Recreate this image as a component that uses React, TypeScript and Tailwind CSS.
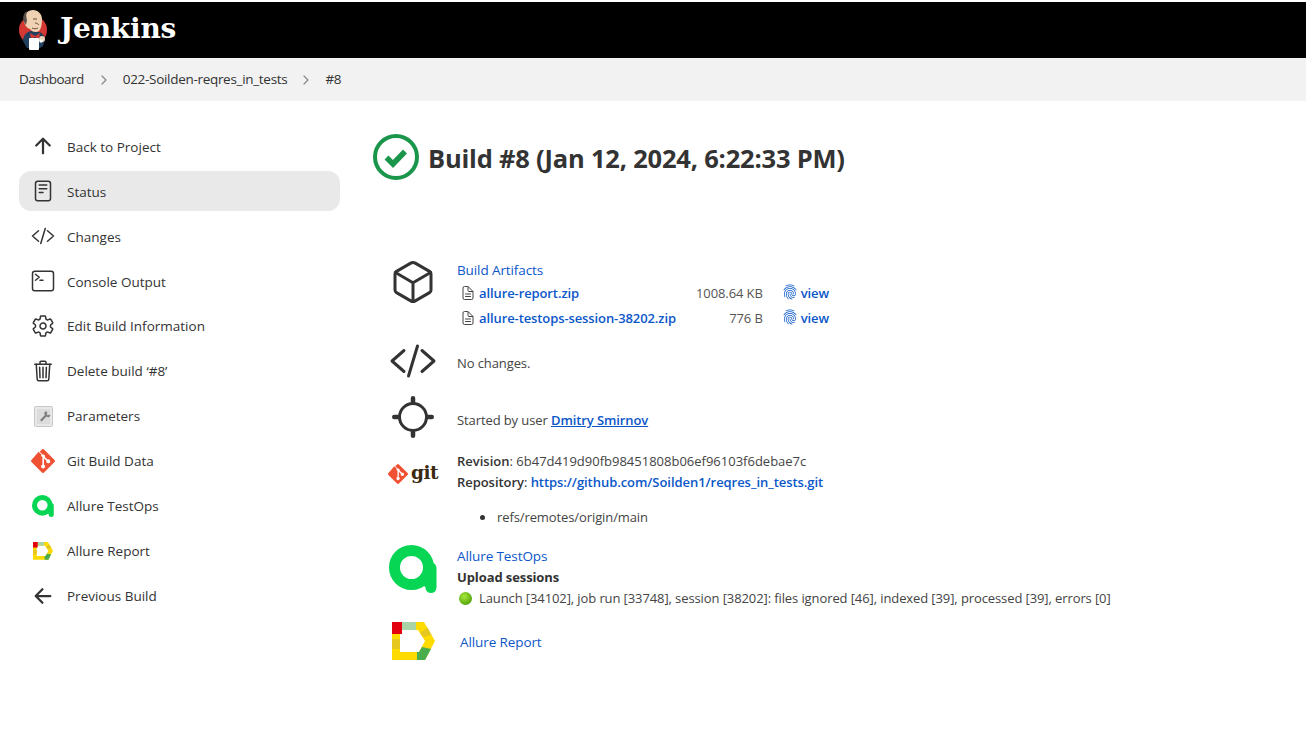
import type { ReactNode } from "react";
import {
  IoArrowBackOutline,
  IoArrowUpOutline,
  IoChevronForwardOutline,
  IoCodeSlashOutline,
  IoCubeOutline,
  IoDocumentTextOutline,
  IoFingerPrintOutline,
  IoLocateOutline,
  IoReaderOutline,
  IoSettingsOutline,
  IoTerminalOutline,
  IoTrashOutline,
} from "react-icons/io5";

const font = { fontFamily: '"Open Sans", "Noto Sans", sans-serif' };
const serif = { fontFamily: '"DejaVu Serif", "Liberation Serif", serif' };

// Jenkins butler, small drawing for the header
const JenkinsLogo = () => (
  <svg width="30" height="40" viewBox="0 0 30 40" aria-hidden="true">
    <circle cx="15" cy="20" r="14" fill="#d33833" />
    <path d="M5 31c0-5 3-9 8-10l8 1c4 1 6 5 6 8l-2 6-3 2H9z" fill="#24405f" />
    <path d="M6 10C6 4 10 0 15 0s9 4 9 9c0 5-1 10-3 12-3 2-7 1-9-2-3-1-6-4-6-9z" fill="#efd2b3" />
    <path d="M6 12C4 7 6 3 9 1c-1 3-1 6 0 9l-1 5z" fill="#5a5049" />
    <path d="M15 9h4M17 13c2 0 3 1 4 2M14 18c2 1 4 1 6 0" stroke="#6b4a38" strokeWidth="1" fill="none" />
    <path d="M12 23l5 3 5-3-1 6-4-2-4 2z" fill="#d33833" />
    <rect x="11" y="28" width="10" height="12" rx="1" fill="#ffffff" />
    <circle cx="24" cy="29" r="3" fill="#efd2b3" />
    <circle cx="23" cy="31" r="1.800" fill="#ffffff" />
  </svg>
);

const StatusIcon = () => (
  <svg width="46" height="46" viewBox="0 0 46 46" aria-hidden="true">
    <circle cx="23" cy="23" r="21" fill="none" stroke="#1a964b" strokeWidth="4" />
    <path d="M13.500 23.500l6.500 6.500L32 17.500" fill="none" stroke="#1a964b" strokeWidth="5.500" />
  </svg>
);

const GitDiamond = ({ size }: { size: number }) => (
  <svg width={size} height={size} viewBox="0 0 24 24" aria-hidden="true">
    <path
      d="M23.5 10.900 13.100.5a1.600 1.600 0 0 0-2.200 0L8.700 2.700l2.800 2.800a1.900 1.900 0 0 1 2.400 2.400l2.700 2.700a1.900 1.900 0 1 1-1.100 1.100l-2.500-2.500v6.600a1.900 1.900 0 1 1-1.600-.1V8.100a1.900 1.900 0 0 1-1-2.500L7.600 2.800.5 10.900a1.600 1.600 0 0 0 0 2.200l10.400 10.400a1.600 1.600 0 0 0 2.200 0l10.400-10.400a1.600 1.600 0 0 0 0-2.200z"
      fill="#f05133"
    />
  </svg>
);

const TestOpsLogo = ({ size }: { size: number }) => (
  <svg width={size} height={size} viewBox="0 0 48 48" aria-hidden="true">
    <circle cx="22.500" cy="22.500" r="17" fill="none" stroke="#07d654" strokeWidth="11" />
    <path d="M42 23V42.500" fill="none" stroke="#07d654" strokeWidth="11" strokeLinecap="round" />
    <path d="M35 35L39 40" fill="none" stroke="#07d654" strokeWidth="7" />
  </svg>
);

const ReportLogo = ({ width }: { width: number }) => (
  <svg width={width} height={(width * 38) / 43} viewBox="0 0 43 38" aria-hidden="true">
    <path
      d="M0 0H32L43 19 33 38H0zM8 8V30H27L33 19 26 8z"
      fill="#fddb00"
      fillRule="evenodd"
    />
    <rect x="10" y="0" width="14" height="8" fill="#a9d3a6" />
    <path d="M35.500 5.500 39.500 13 31 15 28 11z" fill="#e6c71f" />
    <rect x="0" y="17" width="8" height="10" fill="#e6c71f" />
    <path d="M39 27 33 38H25V30H27L30 25z" fill="#49ad4e" />
    <rect x="0" y="0" width="10" height="12" fill="#e3000f" />
  </svg>
);

const ParametersIcon = () => (
  <svg width="19" height="21" viewBox="0 0 19 21" aria-hidden="true">
    <rect x="0.5" y="0.5" width="18" height="20" rx="1" fill="#e8e8e8" stroke="#c8c8c8" />
    <rect x="3" y="3" width="13" height="15" fill="#dcdcdc" />
    <path d="M12 5l-2 2 1 2-5 5 1.500 1.500 5-5 2 1 2-2-1.500-1-1 1-1.500-1.500 1-1z" fill="#7d7d7d" />
  </svg>
);

const sideItems: { label: string; icon: ReactNode; active?: boolean }[] = [
  { label: "Back to Project", icon: <IoArrowUpOutline size={24} /> },
  { label: "Status", icon: <IoReaderOutline size={24} />, active: true },
  { label: "Changes", icon: <IoCodeSlashOutline size={24} /> },
  { label: "Console Output", icon: <IoTerminalOutline size={24} /> },
  { label: "Edit Build Information", icon: <IoSettingsOutline size={24} /> },
  { label: "Delete build ‘#8’", icon: <IoTrashOutline size={24} /> },
  { label: "Parameters", icon: <ParametersIcon /> },
  { label: "Git Build Data", icon: <GitDiamond size={24} /> },
  { label: "Allure TestOps", icon: <TestOpsLogo size={22} /> },
  { label: "Allure Report", icon: <ReportLogo width={20} /> },
  { label: "Previous Build", icon: <IoArrowBackOutline size={24} /> },
];

const artifacts = [
  { name: "allure-report.zip", size: "1008.64 KB" },
  { name: "allure-testops-session-38202.zip", size: "776 B" },
];

const Row = ({ icon, className, children }: { icon: ReactNode; className: string; children: ReactNode }) => (
  <div className={`flex items-center ${className}`}>
    <div className="flex w-[84px] shrink-0 justify-center pr-[4px]">{icon}</div>
    <div className="min-w-0 flex-1">{children}</div>
  </div>
);

export default function App() {
  return (
    <div className="h-[738px] overflow-hidden bg-white pt-[2px] text-[#333333]" style={font}>
      <header className="flex h-[56px] items-center bg-black pl-[18px]">
        <JenkinsLogo />
        <span className="mb-[3px] ml-[12px] text-[28px] leading-none font-bold tracking-[-0.2px] text-white" style={serif}>
          Jenkins
        </span>
      </header>

      <nav className="flex h-[43px] items-center bg-[#f2f2f2] pl-[19px] text-[13.500px] tracking-[-0.3px]">
        <span className="tracking-[-0.55px]">Dashboard</span>
        <IoChevronForwardOutline className="mr-[12px] ml-[13px] text-[#8a8a8a]" size={14} />
        <span>022-Soilden-reqres_in_tests</span>
        <IoChevronForwardOutline className="mx-[12px] text-[#8a8a8a]" size={14} />
        <span>#8</span>
      </nav>

      <div className="flex">
        <aside className="w-[340px] shrink-0 pt-[25px] pl-[19px]">
          <div className="flex flex-col gap-[5px]">
            {sideItems.map((item, i) => (
              <div
                key={item.label}
                className={`flex h-[40px] items-center gap-[12px] rounded-[12px] pl-[12px] text-[13.500px] ${
                  item.active ? "bg-[#e9e9e9]" : ""
                }`}
              >
                <span className="flex w-[24px] justify-center text-[#333333]">{item.icon}</span>
                <span className={i < 4 ? "pt-[2px]" : ""}>{item.label}</span>
              </div>
            ))}
          </div>
        </aside>

        <main className="min-w-0 flex-1 pl-[33px]">
          <div className="flex items-center pt-[33px]">
            <StatusIcon />
            <h1 className="ml-[9px] h-[46px] text-[25.500px] leading-[48px] font-bold tracking-[-0.2px] whitespace-nowrap text-[#333333]">
              Build #8 (Jan 12, 2024, 6:22:33 PM)
            </h1>
          </div>

          <div className="mt-[79px] text-[13px] tracking-[-0.1px]">
            <Row icon={<IoCubeOutline size={48} className="mb-[26px]" />} className="h-[72px]">
              <a className="block text-[13.500px] leading-[22px] font-medium text-[#0b57c9]">Build Artifacts</a>
              {artifacts.map((a) => (
                <div key={a.name} className="flex h-[25px] w-[372px] items-center">
                  <IoDocumentTextOutline className="ml-[3px] shrink-0 -translate-y-[1px] text-[#444444]" size={16} />
                  <a className="ml-[3px] font-semibold text-[#0b57c9]">{a.name}</a>
                  <span className="ml-auto text-[#555555]">{a.size}</span>
                  <span className="ml-[19px] flex items-center gap-[3px] font-semibold text-[#0b57c9]">
                    <IoFingerPrintOutline size={16} className="-translate-y-[2px]" />
                    view
                  </span>
                </div>
              ))}
            </Row>
            <Row icon={<IoCodeSlashOutline size={48} />} className="mt-[8px] h-[44px]">
              <div className="pt-[6px] text-[#444444]">No changes.</div>
            </Row>
            <Row icon={<IoLocateOutline size={48} className="mb-[6px]" />} className="mt-[13px] h-[48px]">
              <div className="pt-[2px] text-[#444444]">
                Started by user{" "}
                <a className="font-semibold text-[#0b57c9] underline">Dmitry Smirnov</a>
              </div>
            </Row>
            <Row
              icon={
                <span className="flex items-center gap-[3px] pt-[4px]">
                  <GitDiamond size={20} />
                  <span className="mb-[2px] text-[18.500px] leading-none font-bold tracking-[-0.5px] text-[#3b2a10]" style={serif}>
                    git
                  </span>
                </span>
              }
              className="mt-[7px] h-[42px]"
            >
              <div className="leading-[21px] tracking-[0px] text-[#444444]">
                <b className="font-semibold text-[#333333]">Revision</b>: 6b47d419d90fb98451808b06ef96103f6debae7c
              </div>
              <div className="leading-[21px] tracking-[-0.05px]">
                <b className="font-semibold text-[#333333]">Repository</b>:{" "}
                <a className="font-semibold text-[#0b57c9]">https://github.com/Soilden1/reqres_in_tests.git</a>
              </div>
            </Row>
            <ul className="mt-[14px] ml-[107px] h-[21px] leading-[21px] text-[#444444]">
              <li className="flex items-center gap-[12px]">
                <span className="h-[5px] w-[5px] rounded-full bg-[#333333]" />
                refs/remotes/origin/main
              </li>
            </ul>
            <Row icon={<TestOpsLogo size={48} />} className="mt-[18px] h-[63px] [&>div:first-child>svg]:mb-[18px]">
              <a className="block text-[13.500px] leading-[21px] font-medium text-[#0b57c9]">Allure TestOps</a>
              <div className="leading-[21px] font-bold text-[#333333]">Upload sessions</div>
              <div className="flex items-center gap-[7px] pl-[2px] leading-[21px] text-[#444444]">
                <span className="h-[13px] w-[13px] rounded-full bg-[radial-gradient(circle_at_40%_35%,#a6e83c,#5aa80d_70%,#3d7a08)]" />
                Launch [34102], job run [33748], session [38202]: files ignored [46], indexed [39], processed [39], errors [0]
              </div>
            </Row>
            <Row icon={<ReportLogo width={43} />} className="mt-[10px] h-[46px] [&>div:first-child>svg]:mb-[2px]">
              <a className="ml-[3px] text-[13.500px] font-medium text-[#0b57c9]">Allure Report</a>
            </Row>
          </div>
        </main>
      </div>
    </div>
  );
}
